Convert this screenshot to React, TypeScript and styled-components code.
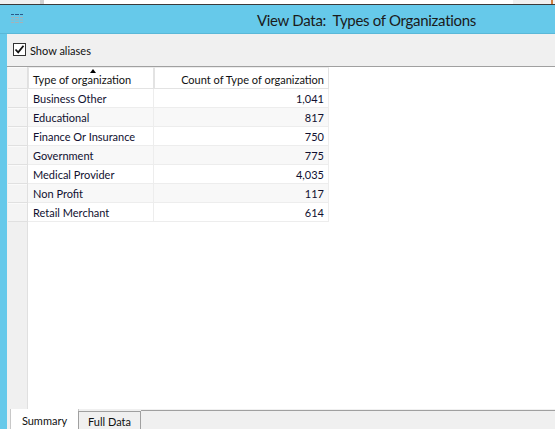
import React from "react";
import styled, { createGlobalStyle } from "styled-components";

const Global = createGlobalStyle`
  html, body { margin: 0; padding: 0; overflow: hidden; background: #f0f0f0; }
  * { box-sizing: border-box; }
`;

const FONT = `Lato, "Noto Sans", sans-serif`;

const Window = styled.div`
  width: 555px;
  height: 429px;
  display: flex;
  flex-direction: column;
  font-family: ${FONT};
  color: #1a1a2e;
`;

const TopStrip = styled.div`
  height: 5px;
  display: flex;
  border-bottom: 1px solid #3a3a3a;
  background: #f0f0f0;
`;

const TopSeg = styled.div<{ $w?: number; $bg: string }>`
  ${(p) => (p.$w ? `width: ${p.$w}px;` : "flex: 1;")}
  background: ${(p) => p.$bg};
`;

const TitleBar = styled.div`
  height: 29px;
  background: #66c9ea;
  display: flex;
  align-items: center;
  padding-left: 10px;
  padding-right: 79px;
  border-bottom: 1px solid #5ab8d8;
`;

const Title = styled.div`
  margin-left: auto;
  font-size: 15px;
  letter-spacing: -0.3px;
  color: #1b1b1b;
  padding-top: 1px;
`;

const Body = styled.div`
  flex: 1;
  display: flex;
  background: #66c9ea;
  min-height: 0;
`;

const Panel = styled.div`
  margin-left: 7px;
  flex: 1;
  display: flex;
  flex-direction: column;
  background: #f0f0f0;
`;

const Toolbar = styled.div`
  height: 33px;
  display: flex;
  align-items: center;
  padding-left: 6px;
  gap: 4px;
  border-bottom: 1px solid #a0a0a0;
`;

const Check = styled.div`
  width: 13px;
  height: 13px;
  border: 1px solid #333;
  background: #fff;
  display: flex;
  align-items: center;
  justify-content: center;
  margin-top: -1px;
`;

const Label = styled.span`
  font-size: 11px;
  color: #111;
`;

const GridArea = styled.div`
  flex: 1;
  display: flex;
  padding-left: 1px;
  min-height: 0;
`;

const RowHeaderCol = styled.div`
  width: 20px;
  background: #f0f0f0;
  display: flex;
  flex-direction: column;
  border-right: 1px solid #e0e0e0;
`;

const RowHeaderCell = styled.div<{ $head?: boolean }>`
  height: ${(p) => (p.$head ? 22 : 19)}px;
  border-bottom: 1px solid #e0e0e0;
  background: #f4f4f4;
  border-top: 1px solid #fafafa;
`;

const DataArea = styled.div`
  flex: 1;
  background: #fff;
`;

const Table = styled.div`
  display: grid;
  grid-template-columns: 126px 175px;
  width: 301px;
`;

const HeadCell = styled.div<{ $right?: boolean }>`
  position: relative;
  height: 22px;
  font-size: 11px;
  display: flex;
  align-items: center;
  justify-content: ${(p) => (p.$right ? "flex-end" : "flex-start")};
  padding: 2px ${(p) => (p.$right ? "4px" : "0")} 0 ${(p) => (p.$right ? "0" : "4px")};
  border: 1px solid #e3e3e3;
  border-top-color: #ececec;
  color: #111;
`;

const SortArrow = styled.div`
  position: absolute;
  top: 1px;
  left: 61px;
  width: 0;
  height: 0;
  border-left: 3.5px solid transparent;
  border-right: 3.5px solid transparent;
  border-bottom: 4px solid #000;
`;

const Cell = styled.div<{ $right?: boolean; $alt?: boolean }>`
  height: 19px;
  font-size: 11px;
  display: flex;
  align-items: center;
  justify-content: ${(p) => (p.$right ? "flex-end" : "flex-start")};
  padding: 0 ${(p) => (p.$right ? "4px" : "0")} 0 ${(p) => (p.$right ? "0" : "5px")};
  border-right: 1px solid #ededed;
  border-bottom: 1px solid #ededed;
  background: ${(p) => (p.$alt ? "#f8f8f8" : "#fff")};
  color: #101030;
`;

const TabBar = styled.div`
  height: 20px;
  display: flex;
  padding-left: 3px;
`;

const Tab = styled.div<{ $active?: boolean }>`
  font-size: 11px;
  color: #111;
  display: flex;
  align-items: center;
  justify-content: center;
  height: ${(p) => (p.$active ? "20px" : "18px")};
  width: ${(p) => (p.$active ? "69px" : "63px")};
  background: ${(p) => (p.$active ? "#fff" : "#f0f0f0")};
  border: 1px solid ${(p) => (p.$active ? "#c8c8c8" : "#a0a0a0")};
  border-top: ${(p) => (p.$active ? "none" : "1px solid #a0a0a0")};
  border-bottom: none;
  padding-top: ${(p) => (p.$active ? "3px" : "1px")};
  margin-left: ${(p) => (p.$active ? "0" : "-1px")};
  margin-top: ${(p) => (p.$active ? "0" : "2px")};
`;

const TabLine = styled.div`
  flex: 1;
  border-top: 1px solid #a0a0a0;
  margin-top: 1px;
  height: 1px;
`;

const rows: [string, string][] = [
  ["Business Other", "1,041"],
  ["Educational", "817"],
  ["Finance Or Insurance", "750"],
  ["Government", "775"],
  ["Medical Provider", "4,035"],
  ["Non Profit", "117"],
  ["Retail Merchant", "614"],
];

const AppIcon = () => (
  <svg width="14" height="12" viewBox="0 0 14 12">
    <rect x="1" y="1" width="3" height="1" fill="#2a5a8a" />
    <rect x="5" y="1" width="4" height="1" fill="#2a5a8a" />
    <rect x="10" y="1" width="3" height="1" fill="#2a5a8a" />
    {[4, 6.5, 9].map((y) => (
      <React.Fragment key={y}>
        <rect x="1" y={y} width="3" height="0.8" fill="#d9a090" opacity="0.7" />
        <rect x="5" y={y} width="4" height="0.8" fill="#d9a090" opacity="0.7" />
        <rect x="10" y={y} width="3" height="0.8" fill="#d9a090" opacity="0.7" />
      </React.Fragment>
    ))}
  </svg>
);

export default function App() {
  return (
    <Window>
      <Global />
      <TopStrip>
        <TopSeg $w={40} $bg="#f0f0f0" />
        <TopSeg $w={4} $bg="#d0d0d0" />
        <TopSeg $bg="#ffffff" />
        <TopSeg $w={38} $bg="#f0f0f0" />
        <TopSeg $w={2} $bg="#d08040" />
        <TopSeg $w={2} $bg="#f0f0f0" />
      </TopStrip>
      <TitleBar>
        <AppIcon />
        <Title>View Data:&nbsp; Types of Organizations</Title>
      </TitleBar>
      <Body>
        <Panel>
          <Toolbar>
            <Check>
              <svg width="11" height="11" viewBox="0 0 11 11">
                <path d="M1.5 5.5 L4.2 8.3 L9.5 1.8" stroke="#111" strokeWidth="1.8" fill="none" />
              </svg>
            </Check>
            <Label>Show aliases</Label>
          </Toolbar>
          <GridArea>
            <RowHeaderCol>
              <RowHeaderCell $head />
              {rows.map((r) => (
                <RowHeaderCell key={r[0]} />
              ))}
            </RowHeaderCol>
            <DataArea>
              <Table>
                <HeadCell>
                  <SortArrow />
                  Type of organization
                </HeadCell>
                <HeadCell $right>Count of Type of organization</HeadCell>
                {rows.map(([name, count], i) => (
                  <React.Fragment key={name}>
                    <Cell $alt={i % 2 === 1}>{name}</Cell>
                    <Cell $right $alt={i % 2 === 1}>{count}</Cell>
                  </React.Fragment>
                ))}
              </Table>
            </DataArea>
          </GridArea>
          <TabBar>
            <Tab $active>Summary</Tab>
            <Tab>Full Data</Tab>
            <TabLine />
          </TabBar>
        </Panel>
      </Body>
    </Window>
  );
}
